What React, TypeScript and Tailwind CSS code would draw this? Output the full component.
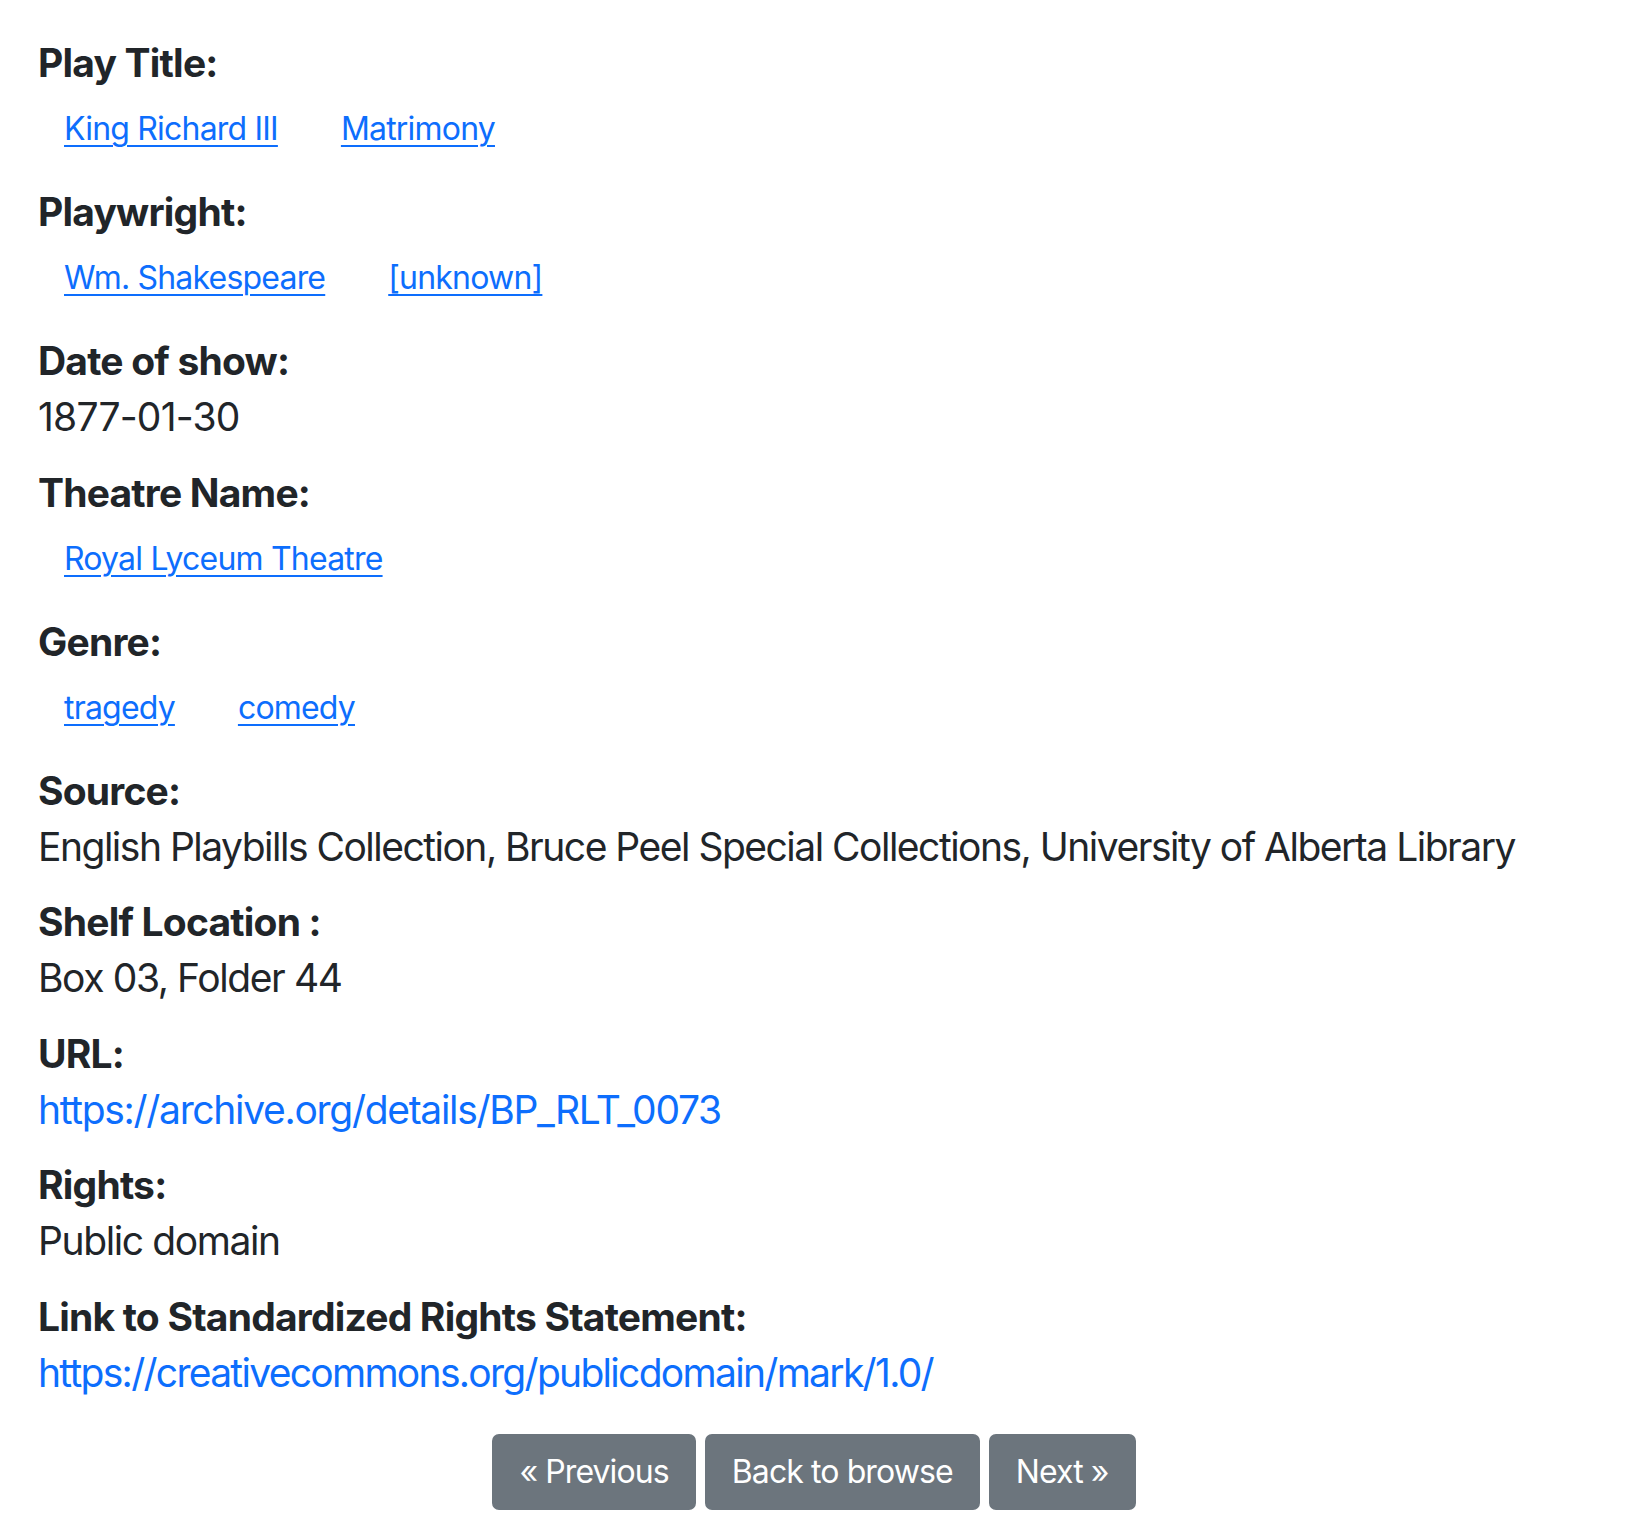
import React from "react";

const font = { fontFamily: 'Inter, "Noto Sans", "Liberation Sans", sans-serif' };

function Heading({ children }: { children: React.ReactNode }) {
  return (
    <h5 className="m-0 mb-[8px] text-[39px] leading-[48px] font-bold tracking-[-0.8px] text-[#212529]">
      {children}
    </h5>
  );
}

function Value({ children }: { children: React.ReactNode }) {
  return (
    <p className="m-0 mb-[27.5px] text-[39px] leading-[48px] tracking-[-1.4px] text-[#212529]">{children}</p>
  );
}

function LinkRow({ items }: { items: string[] }) {
  return (
    <div className="flex flex-row gap-[15px] pt-[10px] pb-[12px] mb-[23px] ml-[2px]">
      {items.map((t) => (
        <a
          key={t}
          href="#"
          className="px-[24px] text-[32px] leading-[48px] tracking-[-0.8px] text-[#0d6efd] underline decoration-2 underline-offset-[5px]"
        >
          {t}
        </a>
      ))}
    </div>
  );
}

const btn =
  "rounded-[7px] border-2 border-[#6c757d] bg-[#6c757d] px-[25px] py-[12px] text-[32px] leading-[48px] tracking-[-0.9px] text-white";

export default function App() {
  return (
    <div className="min-h-[1536px] bg-white pt-[39px] pl-[38px] pr-[58px]" style={font}>
      <Heading>Play Title:</Heading>
      <LinkRow items={["King Richard III", "Matrimony"]} />
      <Heading>Playwright:</Heading>
      <LinkRow items={["Wm. Shakespeare", "[unknown]"]} />
      <Heading>Date of show:</Heading>
      <Value>
        <span className="tracking-[-0.8px]">1877-01-30</span>
      </Value>
      <Heading>Theatre Name:</Heading>
      <LinkRow items={["Royal Lyceum Theatre"]} />
      <Heading>Genre:</Heading>
      <LinkRow items={["tragedy", "comedy"]} />
      <Heading>Source:</Heading>
      <Value>
        <span className="tracking-[-1.5px]">
          English Playbills Collection, Bruce Peel Special Collections, University of Alberta Library
        </span>
      </Value>
      <Heading>Shelf Location :</Heading>
      <Value>Box 03, Folder 44</Value>
      <Heading>URL:</Heading>
      <Value>
        <a href="#" className="text-[#0d6efd] no-underline tracking-[-1.3px]">
          https://archive.org/details/BP_RLT_0073
        </a>
      </Value>
      <Heading>Rights:</Heading>
      <Value>Public domain</Value>
      <Heading>Link to Standardized Rights Statement:</Heading>
      <Value>
        <a href="#" className="text-[#0d6efd] no-underline tracking-[-1.7px]">
          https://creativecommons.org/publicdomain/mark/1.0/
        </a>
      </Value>
      <div className="flex flex-row justify-center gap-[9px] pt-[10px]">
        <button className={btn}>« Previous</button>
        <button className={btn}>Back to browse</button>
        <button className={btn}>Next »</button>
      </div>
    </div>
  );
}
